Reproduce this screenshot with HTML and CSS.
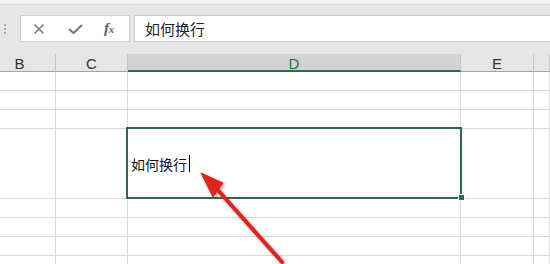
FILE: index.html
```html
<!DOCTYPE html>
<html lang="zh-CN">
<head>
    <meta charset="UTF-8">
    <meta name="viewport" content="width=device-width, initial-scale=1.0">
    <title>如何换行</title>
    <link rel="stylesheet" href="styles.css">
</head>
<body>
    <div class="sheet">
        <div class="ribbon-edge"></div>
        <div class="formula-bar">
            <div class="grip"><span></span><span></span><span></span></div>
            <div class="fx-buttons">
                <svg class="btn-icon" width="12" height="12" viewBox="0 0 12 12">
                    <path d="M1.5 1.5 L10.5 10.5 M10.5 1.5 L1.5 10.5" stroke="#7b7b7b" stroke-width="1.6" fill="none"/>
                </svg>
                <svg class="btn-icon" width="15" height="10" viewBox="0 0 15 10">
                    <path d="M1 5 L5.5 9 L14 1" stroke="#7b7b7b" stroke-width="2.2" fill="none"/>
                </svg>
                <span class="fx">f<small>x</small></span>
            </div>
            <div class="formula-input">如何换行</div>
        </div>

        <div class="grid">
            <div class="col-head first">B</div>
            <div class="col-head">C</div>
            <div class="col-head active">D</div>
            <div class="col-head">E</div>
            <div class="col-head"></div>

            <div class="cell"></div><div class="cell"></div><div class="cell"></div><div class="cell"></div><div class="cell"></div>
            <div class="cell"></div><div class="cell"></div><div class="cell"></div><div class="cell"></div><div class="cell"></div>
            <div class="cell"></div><div class="cell"></div><div class="cell"></div><div class="cell"></div><div class="cell"></div>

            <div class="cell"></div>
            <div class="cell"></div>
            <div class="cell selected">
                <span class="cell-text">如何换行</span><span class="caret"></span>
                <span class="fill-handle"></span>
            </div>
            <div class="cell"></div>
            <div class="cell"></div>

            <div class="cell"></div><div class="cell"></div><div class="cell"></div><div class="cell"></div><div class="cell"></div>
            <div class="cell"></div><div class="cell"></div><div class="cell"></div><div class="cell"></div><div class="cell"></div>
            <div class="cell"></div><div class="cell"></div><div class="cell"></div><div class="cell"></div><div class="cell"></div>
            <div class="cell"></div><div class="cell"></div><div class="cell"></div><div class="cell"></div><div class="cell"></div>
        </div>

        <svg class="arrow" width="550" height="264" viewBox="0 0 550 264">
            <defs>
                <filter id="soft" x="-20%" y="-20%" width="140%" height="140%">
                    <feDropShadow dx="1.5" dy="1.5" stdDeviation="1.6" flood-color="#000" flood-opacity="0.35"/>
                </filter>
            </defs>
            <g filter="url(#soft)" fill="#e2201c" stroke="#e2201c">
                <line x1="282" y1="262" x2="216" y2="188" stroke-width="4" stroke-linecap="round"/>
                <polygon points="201,173 223,183 213,197" stroke-width="1" stroke-linejoin="round"/>
            </g>
        </svg>
    </div>
</body>
</html>
```

FILE: styles.css
```css
* {
    box-sizing: border-box;
}
body {
    margin: 0;
    background: #fff;
    font-family: "Liberation Sans", Arial, sans-serif;
    overflow: hidden;
}
.sheet {
    position: relative;
    width: 550px;
    height: 264px;
    overflow: hidden;
}
.ribbon-edge {
    height: 5px;
    background: #f3f3f3;
    border-bottom: 1px solid #dedede;
}
.formula-bar {
    height: 49px;
    background: #e6e6e6;
    padding-top: 10px;
    display: flex;
    align-items: flex-start;
}
.grip {
    width: 20px;
    height: 27px;
    display: flex;
    flex-direction: column;
    align-items: center;
    justify-content: center;
    gap: 2px;
    padding-right: 10px;
}
.grip span {
    width: 2px;
    height: 2px;
    background: #a8a8a8;
}
.fx-buttons {
    width: 110px;
    height: 27px;
    background: #fff;
    border: 1px solid #d0d0d0;
    display: flex;
    align-items: center;
    padding-left: 12px;
}
.btn-icon {
    display: block;
}
.fx-buttons .btn-icon:first-child {
    margin-right: 23px;
}
.fx-buttons .btn-icon:nth-child(2) {
    margin-right: 21px;
}
.fx {
    font-family: "Liberation Serif", "Times New Roman", serif;
    font-style: italic;
    font-weight: bold;
    font-size: 15px;
    color: #5e5e5e;
    line-height: 1;
}
.fx small {
    font-size: 10px;
}
.formula-input {
    flex: 1;
    height: 27px;
    margin-left: 4px;
    background: #fff;
    border: 1px solid #c8c8c8;
    border-right: none;
    padding-left: 10px;
    font-family: "Noto Sans CJK SC", sans-serif;
    font-size: 15px;
    line-height: 25px;
    color: #222;
}
.grid {
    display: grid;
    grid-template-columns: 56px 72px 333px 73px 1fr;
    grid-template-rows: 18px repeat(3, 19px) 70px repeat(4, 19px);
}
.col-head {
    background: #e6e6e6;
    border-right: 1px solid #c6c6c6;
    border-bottom: 1px solid #a3a3a3;
    font-size: 15px;
    line-height: 18px;
    padding-top: 1px;
    text-align: center;
    color: #333;
}
.col-head.first {
    padding-right: 16px;
}
.col-head.active {
    background: #d3d3d3;
    color: #217346;
    border-bottom: 2px solid #217346;
}
.cell {
    border-right: 1px solid #d9d9d9;
    border-bottom: 1px solid #d9d9d9;
}
.cell.selected {
    position: relative;
    display: flex;
    align-items: flex-end;
    padding-left: 3px;
    padding-bottom: 25px;
}
.cell.selected::after {
    content: "";
    position: absolute;
    left: -2px;
    top: -2px;
    right: -2px;
    bottom: -1px;
    border: 2px solid #2b6b4a;
}
.cell-text {
    font-family: "Noto Sans CJK SC", sans-serif;
    font-size: 14px;
    line-height: 18px;
    color: #111;
}
.caret {
    width: 1px;
    height: 17px;
    background: #000;
    margin-left: 2px;
    margin-bottom: 1px;
}
.fill-handle {
    position: absolute;
    right: -4px;
    bottom: -2px;
    width: 5px;
    height: 5px;
    background: #2b6b4a;
    outline: 1px solid #fff;
    z-index: 1;
}
.arrow {
    position: absolute;
    left: 0;
    top: 0;
    pointer-events: none;
}
```
